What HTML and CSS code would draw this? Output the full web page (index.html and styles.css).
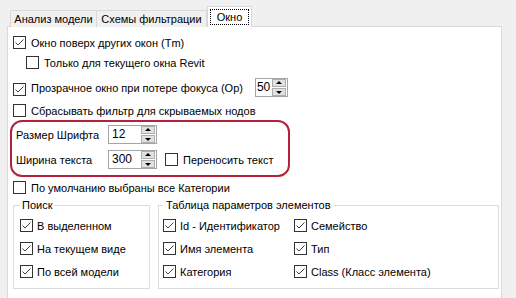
FILE: index.html
```html
<!DOCTYPE html>
<html lang="ru">
<head>
  <meta charset="UTF-8">
  <title>Окно</title>
  <link rel="stylesheet" href="styles.css">
</head>
<body>

<div class="window">
  <div class="tabs">
    <div class="tab tab-1">Анализ модели</div>
    <div class="tab tab-2">Схемы фильтрации</div>
    <div class="tab active"><span class="focus">Окно</span></div>
  </div>

  <div class="panel">
    <label class="row r1">
      <span class="cb"><svg viewBox="0 0 11 11"><path d="M1.5 5.5l2.5 2.5 5.5-5.5"/></svg></span>
      Окно поверх других окон (Tm)
    </label>
    <label class="row r2">
      <span class="cb"></span>
      Только для текущего окна Revit
    </label>
    <div class="row r3">
      <span class="cb"><svg viewBox="0 0 11 11"><path d="M1.5 5.5l2.5 2.5 5.5-5.5"/></svg></span>
      <span>Прозрачное окно при потере фокуса (Op)</span>
      <div class="spin spin-small">
        <span class="value">50</span>
        <span class="arrows"><span class="up"></span><span class="down"></span></span>
      </div>
    </div>
    <label class="row r4">
      <span class="cb"></span>
      Сбрасывать фильтр для скрываемых нодов
    </label>

    <div class="highlight">
      <div class="line">
        <span class="caption">Размер Шрифта</span>
        <div class="spin">
          <span class="value">12</span>
          <span class="arrows"><span class="up"></span><span class="down"></span></span>
        </div>
      </div>
      <div class="line">
        <span class="caption">Ширина текста</span>
        <div class="spin">
          <span class="value">300</span>
          <span class="arrows"><span class="up"></span><span class="down"></span></span>
        </div>
        <label class="wrap">
          <span class="cb"></span>
          Переносить текст
        </label>
      </div>
    </div>

    <label class="row r5">
      <span class="cb"></span>
      По умолчанию выбраны все Категории
    </label>

    <div class="groups">
      <fieldset class="group search">
        <legend>Поиск</legend>
        <label class="item"><span class="cb"><svg viewBox="0 0 11 11"><path d="M1.5 5.5l2.5 2.5 5.5-5.5"/></svg></span>В выделенном</label>
        <label class="item"><span class="cb"><svg viewBox="0 0 11 11"><path d="M1.5 5.5l2.5 2.5 5.5-5.5"/></svg></span>На текущем виде</label>
        <label class="item"><span class="cb"><svg viewBox="0 0 11 11"><path d="M1.5 5.5l2.5 2.5 5.5-5.5"/></svg></span>По всей модели</label>
      </fieldset>

      <fieldset class="group params">
        <legend>Таблица параметров элементов</legend>
        <label class="item"><span class="cb"><svg viewBox="0 0 11 11"><path d="M1.5 5.5l2.5 2.5 5.5-5.5"/></svg></span>Id - Идентификатор</label>
        <label class="item"><span class="cb"><svg viewBox="0 0 11 11"><path d="M1.5 5.5l2.5 2.5 5.5-5.5"/></svg></span>Семейство</label>
        <label class="item"><span class="cb"><svg viewBox="0 0 11 11"><path d="M1.5 5.5l2.5 2.5 5.5-5.5"/></svg></span>Имя элемента</label>
        <label class="item"><span class="cb"><svg viewBox="0 0 11 11"><path d="M1.5 5.5l2.5 2.5 5.5-5.5"/></svg></span>Тип</label>
        <label class="item"><span class="cb"><svg viewBox="0 0 11 11"><path d="M1.5 5.5l2.5 2.5 5.5-5.5"/></svg></span>Категория</label>
        <label class="item"><span class="cb"><svg viewBox="0 0 11 11"><path d="M1.5 5.5l2.5 2.5 5.5-5.5"/></svg></span>Class (Класс элемента)</label>
      </fieldset>
    </div>
  </div>
</div>

</body>
</html>
```

FILE: styles.css
```css
* { box-sizing: border-box; }

body {
  margin: 0;
  height: 298px;
  background: #f0f0f0;
  font-family: "Liberation Sans", Arial, sans-serif;
  font-size: 11px;
  color: #000;
  overflow: hidden;
}

.window {
  padding: 6px 0 0 7px;
}

/* Tabs */
.tabs {
  display: flex;
  align-items: flex-end;
  height: 21px;
  margin-left: 3px;
  margin-bottom: -1px;
  position: relative;
  z-index: 1;
}

.tab {
  height: 17px;
  line-height: 16px;
  border: 1px solid #d9d9d9;
  border-bottom: none;
  background: #f0f0f0;
  text-align: center;
  white-space: nowrap;
}

.tab-1 { width: 87px; }
.tab-2 { width: 111px; margin-left: -1px; }

.tab.active {
  width: 45px;
  height: 21px;
  margin-left: 0;
  background: #fff;
  padding: 2px 2px 0;
}

.focus {
  display: block;
  height: 16px;
  line-height: 14px;
  border: 1px dotted #000;
}

/* Page */
.panel {
  width: 495px;
  height: 272px;
  background: #fff;
  border: 1px solid #d9d9d9;
  border-bottom: none;
  padding: 9px 0 0 5px;
}

.row {
  display: flex;
  align-items: center;
  height: 13px;
  gap: 5px;
  white-space: nowrap;
}

.r2 { margin-top: 7px; margin-left: 13px; }
.r3 { margin-top: 9px; height: 19px; }
.r3 > .cb { align-self: flex-end; margin-bottom: 1px; }
.r4 { margin-top: 7px; }
.r5 { margin-top: 4px; }

.cb {
  flex: none;
  display: inline-block;
  width: 13px;
  height: 13px;
  border: 1px solid #333;
  background: #fff;
}

.cb svg {
  display: block;
  width: 11px;
  height: 11px;
  fill: none;
  stroke: #444;
  stroke-width: 1;
}

/* Numeric up-down */
.spin {
  flex: none;
  display: flex;
  align-items: center;
  width: 49px;
  height: 19px;
  border: 1px solid #a5a5a5;
  background: #fff;
  padding: 0 1px 0 3px;
}

.spin-small {
  width: 33px;
  margin-left: 7px;
  padding-left: 1px;
}

.spin .value {
  flex: 1;
  font-size: 12px;
  line-height: 15px;
}

.arrows {
  display: flex;
  flex-direction: column;
  gap: 1px;
  width: 14px;
}

.arrows span {
  position: relative;
  height: 8px;
  background: #e1e1e1;
  border: 1px solid #adadad;
}

.arrows span::after {
  content: "";
  position: absolute;
  left: 3px;
  top: 1px;
  border-left: 3px solid transparent;
  border-right: 3px solid transparent;
}

.arrows .up::after { border-bottom: 3px solid #000; }
.arrows .down::after { border-top: 3px solid #000; top: 2px; }

/* Red frame */
.highlight {
  width: 280px;
  margin: 3px 0 0 -3px;
  border: 2px solid #b3213d;
  border-radius: 12px;
  padding: 3px 0 6px 4px;
}

.line {
  display: flex;
  align-items: center;
  height: 19px;
}

.line + .line { margin-top: 6px; }

.caption {
  width: 92px;
}

.wrap {
  display: flex;
  align-items: center;
  gap: 5px;
  margin-left: 8px;
}

/* Groups */
.groups {
  display: flex;
  gap: 8px;
  margin-top: 4px;
}

.group {
  margin: 0;
  min-width: 0;
  border: 1px solid #dcdcdc;
  padding: 7px 0 10px 6px;
}

.group legend {
  padding: 0 2px;
  line-height: 14px;
}

.search {
  width: 137px;
  display: flex;
  flex-direction: column;
  gap: 10px;
}

.params {
  width: 341px;
  padding-left: 4px;
  display: grid;
  grid-template-columns: 131px 1fr;
  row-gap: 10px;
}

.params legend { padding: 0 3px; }

.item {
  display: flex;
  align-items: center;
  gap: 4px;
  height: 13px;
  white-space: nowrap;
}
```
